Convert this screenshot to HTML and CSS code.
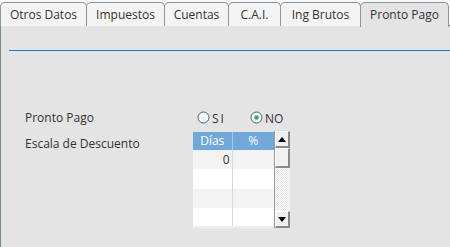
FILE: index.html
```html
<!DOCTYPE html>
<html lang="es">
<head>
    <meta charset="UTF-8">
    <meta name="viewport" content="width=device-width, initial-scale=1.0">
    <title>Pronto Pago</title>
    <link rel="stylesheet" href="styles.css">
</head>
<body>
    <div class="tabs">
        <div class="tab tab-otros">Otros Datos</div>
        <div class="tab tab-impuestos">Impuestos</div>
        <div class="tab tab-cuentas">Cuentas</div>
        <div class="tab tab-cai">C.A.I.</div>
        <div class="tab tab-ing">Ing Brutos</div>
        <div class="tab tab-pronto active">Pronto Pago</div>
    </div>

    <div class="panel">
        <div class="separator"></div>

        <div class="form">
            <div class="label">Pronto Pago</div>
            <div class="radios">
                <label class="radio">
                    <svg width="13" height="13" viewBox="0 0 13 13">
                        <circle cx="6.5" cy="6.5" r="5.5" fill="#f4f6f8" stroke="#3f5f86" stroke-width="1"/>
                    </svg>
                    <span class="radio-text si">SI</span>
                </label>
                <label class="radio">
                    <svg width="13" height="13" viewBox="0 0 13 13">
                        <circle cx="6.5" cy="6.5" r="5.5" fill="#f4f6f8" stroke="#3f5f86" stroke-width="1"/>
                        <circle cx="6.5" cy="6.5" r="2.3" fill="#2fb24a"/>
                    </svg>
                    <span class="radio-text">NO</span>
                </label>
            </div>

            <div class="label label-escala">Escala de Descuento</div>
            <div class="grid-box">
                <table class="grid">
                    <thead>
                        <tr>
                            <th class="col-dias">Días</th>
                            <th class="col-pct">%</th>
                        </tr>
                    </thead>
                    <tbody>
                        <tr class="alt"><td class="num">0</td><td></td></tr>
                        <tr><td></td><td></td></tr>
                        <tr class="alt"><td></td><td></td></tr>
                        <tr><td></td><td></td></tr>
                    </tbody>
                </table>
                <div class="scrollbar">
                    <div class="sb-btn"><span class="arrow up"></span></div>
                    <div class="sb-thumb"></div>
                    <div class="sb-track"></div>
                    <div class="sb-btn"><span class="arrow down"></span></div>
                </div>
            </div>
        </div>
    </div>
</body>
</html>
```

FILE: styles.css
```css
:root {
    --panel-bg: #e4e4e4;
    --tab-bg: #f4f4f4;
    --tab-border: #8b959c;
    --text: #333333;
    --accent: #1b7bd3;
    --grid-head: #70a8da;
}

* {
    box-sizing: border-box;
    margin: 0;
    padding: 0;
}

body {
    width: 450px;
    height: 247px;
    overflow: hidden;
    background-color: #f8f8f8;
    font-family: 'Open Sans', 'Liberation Sans', sans-serif;
    font-size: 12px;
    color: var(--text);
}

/* tab strip */
.tabs {
    display: flex;
    height: 26px;
    padding-top: 2px;
    border-bottom: 1px solid var(--tab-border);
}

.tab {
    height: 24px;
    line-height: 22px;
    padding-top: 1px;
    margin-right: -1px;
    text-align: center;
    background-color: var(--tab-bg);
    border: 1px solid var(--tab-border);
    border-bottom: none;
    border-radius: 5px 5px 0 0;
    white-space: nowrap;
}

.tab-otros { width: 87px; }
.tab-impuestos { width: 79px; }
.tab-cuentas { width: 65px; }
.tab-cai { width: 53px; }
.tab-ing { width: 81px; }
.tab-pronto { width: 89px; }

.tab.active {
    height: 25px;
    margin-bottom: -1px;
    background-color: var(--panel-bg);
}

/* panel body */
.panel {
    height: 221px;
    background-color: var(--panel-bg);
    border-left: 1px solid #7b8790;
    padding: 24px 0 0 8px;
}

.separator {
    height: 1px;
    background-color: var(--accent);
}

.form {
    display: grid;
    grid-template-columns: 168px auto;
    row-gap: 6px;
    margin: 58px 0 0 16px;
    align-items: start;
}

.label {
    line-height: 17px;
}

.label-escala {
    padding-top: 3px;
}

.radios {
    display: flex;
    align-items: center;
    height: 17px;
    gap: 24px;
    padding-left: 4px;
}

.radio {
    display: flex;
    align-items: center;
    gap: 2px;
}

.radio svg {
    display: block;
}

.radio-text {
    font-size: 12px;
    line-height: 17px;
    padding-top: 2px;
}

.radio-text.si {
    letter-spacing: 2px;
}

/* discount grid */
.grid-box {
    display: flex;
    width: 97px;
}

.grid {
    width: 81px;
    border-collapse: collapse;
    table-layout: fixed;
    border-bottom: 2px solid #ececec;
}

.grid th {
    height: 18px;
    background-color: var(--grid-head);
    color: #ffffff;
    font-weight: normal;
    font-size: 12px;
    text-align: center;
    line-height: 18px;
}

.grid th.col-dias {
    width: 39px;
    border-right: 1px solid #a9c9e8;
}

.grid td {
    height: 19px;
    background-color: #ffffff;
    border-right: 1px solid #dadada;
    line-height: 19px;
}

.grid td:last-child {
    border-right: none;
}

.grid tr.alt td {
    background-color: #f3f3f3;
}

.grid td.num {
    text-align: right;
    padding-right: 2px;
}

.scrollbar {
    width: 16px;
    height: 97px;
    display: flex;
    flex-direction: column;
    border-left: 1px solid #9a9a9a;
    margin-top: -1px;
}

.sb-btn,
.sb-thumb {
    background-color: #f0f0f0;
    border-top: 1px solid #ffffff;
    border-left: 1px solid #ffffff;
    border-right: 2px solid #8a8a8a;
    border-bottom: 2px solid #8a8a8a;
    display: flex;
    align-items: center;
    justify-content: center;
}

.sb-btn {
    height: 17px;
}

.sb-thumb {
    height: 20px;
}

.sb-track {
    flex: 1;
    background-color: #ffffff;
    background-image: conic-gradient(#e6e6e6 25%, #ffffff 0 50%, #e6e6e6 0 75%, #ffffff 0);
    background-size: 2px 2px;
}

.arrow {
    width: 0;
    height: 0;
    border-left: 4px solid transparent;
    border-right: 4px solid transparent;
}

.arrow.up {
    border-bottom: 5px solid #000000;
}

.arrow.down {
    border-top: 5px solid #000000;
}
```
